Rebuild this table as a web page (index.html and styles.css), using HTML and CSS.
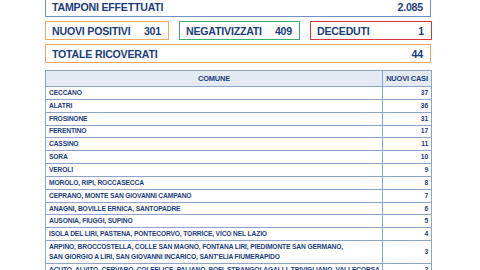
FILE: index.html
```html
<!DOCTYPE html>
<html lang="it">
<head>
<meta charset="utf-8">
<link rel="stylesheet" href="styles.css">
</head>
<body>
<div class="page">
  <div class="box box-blue tamponi"><span>TAMPONI EFFETTUATI</span><span>2.085</span></div>
  <div class="trio">
    <div class="box box-orange"><span>NUOVI POSITIVI</span><span>301</span></div>
    <div class="box box-green"><span>NEGATIVIZZATI</span><span>409</span></div>
    <div class="box box-red"><span>DECEDUTI</span><span>1</span></div>
  </div>
  <div class="box box-orange"><span>TOTALE RICOVERATI</span><span>44</span></div>
  <table class="tbl">
    <colgroup><col class="col-name"><col class="col-num"></colgroup>
    <thead>
      <tr><th class="c-name">COMUNE</th><th class="c-num">NUOVI CASI</th></tr>
    </thead>
    <tbody>
      <tr><td>CECCANO</td><td class="n">37</td></tr>
      <tr><td>ALATRI</td><td class="n">36</td></tr>
      <tr><td>FROSINONE</td><td class="n">31</td></tr>
      <tr><td>FERENTINO</td><td class="n">17</td></tr>
      <tr><td>CASSINO</td><td class="n">11</td></tr>
      <tr><td>SORA</td><td class="n">10</td></tr>
      <tr><td>VEROLI</td><td class="n">9</td></tr>
      <tr><td>MOROLO, RIPI, ROCCASECCA</td><td class="n">8</td></tr>
      <tr><td>CEPRANO, MONTE SAN GIOVANNI CAMPANO</td><td class="n">7</td></tr>
      <tr><td>ANAGNI, BOVILLE ERNICA, SANTOPADRE</td><td class="n">6</td></tr>
      <tr><td>AUSONIA, FIUGGI, SUPINO</td><td class="n">5</td></tr>
      <tr><td>ISOLA DEL LIRI, PASTENA, PONTECORVO, TORRICE, VICO NEL LAZIO</td><td class="n">4</td></tr>
      <tr class="double"><td>ARPINO, BROCCOSTELLA, COLLE SAN MAGNO, FONTANA LIRI, PIEDIMONTE SAN GERMANO,<br>SAN GIORGIO A LIRI, SAN GIOVANNI INCARICO, SANT'ELIA FIUMERAPIDO</td><td class="n">3</td></tr>
      <tr><td>ACUTO, ALVITO, CERVARO, COLFELICE, PALIANO, POFI, STRANGOLAGALLI, TRIVIGLIANO, VALLECORSA</td><td class="n">2</td></tr>
    </tbody>
  </table>
</div>
</body>
</html>
```
FILE: styles.css
```css
html, body {
  margin: 0;
  padding: 0;
  background: #ffffff;
}
body {
  width: 480px;
  height: 270px;
  overflow: hidden;
  font-family: "Liberation Sans Narrow", "Liberation Sans", Arial, sans-serif;
  font-weight: bold;
  color: #1c3d7c;
}
.page {
  width: 386px;
  margin: -3px 0 0 45px;
  display: flex;
  flex-direction: column;
  gap: 4px;
}
.box {
  box-sizing: border-box;
  height: 19px;
  display: flex;
  justify-content: space-between;
  align-items: center;
  padding: 0 7px 0 6px;
  font-size: 10.6px;
  letter-spacing: -0.2px;
  border: 1.5px solid;
}
.tamponi { height: 20px; }
.box-blue { border-color: #6f8fc0; }
.box-orange { border-color: #f2a65e; }
.box-green { border-color: #3fae6a; }
.box-red { border-color: #d8363a; }
.trio {
  display: grid;
  grid-template-columns: 124px 121px 122px;
  column-gap: 10px;
}
.tbl {
  margin-top: 3px;
  width: 386px;
  table-layout: fixed;
  border-collapse: collapse;
  font-size: 6.7px;
  letter-spacing: -0.15px;
}
.col-name { width: 337px; }
.col-num { width: 49px; }
.tbl th, .tbl td {
  border: 1px solid #8ba4c8;
  padding: 0 3px;
  height: 11.85px;
  line-height: 8px;
  white-space: nowrap;
  overflow: hidden;
}
.tbl th {
  background: #e4eaf2;
  height: 15px;
  font-size: 7.4px;
}
.c-name { text-align: center; }
.c-num { text-align: center; }
.tbl td.n { text-align: right; }
.double td { height: 21.6px; line-height: 10px; }
```
